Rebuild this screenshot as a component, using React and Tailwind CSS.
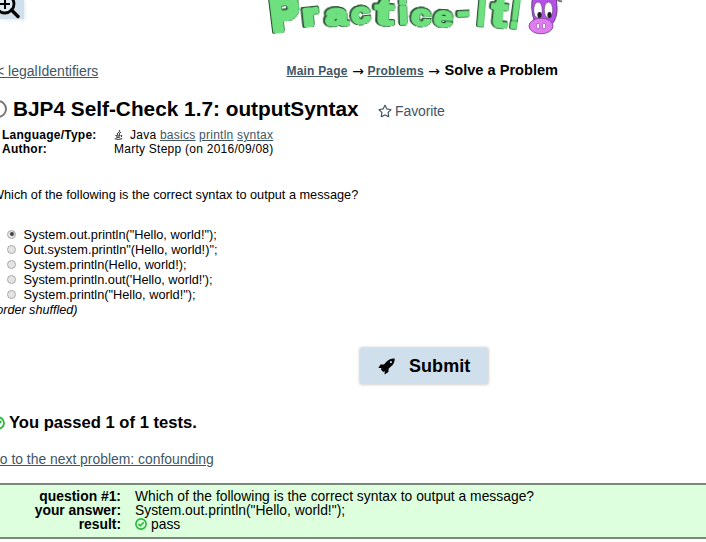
import React from "react";
import { FaRegStar } from "react-icons/fa";

const letters = [
  { c: "P", x: 273, y: 31, s: 46, sx: 0.9, r: -7, w: 6 },
  { c: "r", x: 304, y: 26, s: 30, sx: 1.25, r: -6, w: 4 },
  { c: "a", x: 326, y: 25.5, s: 30, sx: 1.3, r: -2, w: 3.2 },
  { c: "c", x: 352, y: 24.5, s: 30, sx: 1.15, r: -6, w: 2.8 },
  { c: "t", x: 375, y: 24.5, s: 36, sx: 1.5, r: 2, w: 2.8 },
  { c: "i", x: 399, y: 24, s: 31, sx: 1.05, r: -2, w: 2.6 },
  { c: "c", x: 411, y: 25, s: 29, sx: 1.2, r: 3, w: 2.8 },
  { c: "e", x: 433, y: 26.5, s: 30, sx: 1.2, r: 3, w: 2 },
  { c: "-", x: 458, y: 22, s: 28, sx: 1.25, r: -3, w: 2.6 },
  { c: "I", x: 476, y: 25, s: 50, sx: 0.65, r: 5, w: 3 },
  { c: "t", x: 490, y: 26, s: 40, sx: 1.2, r: 6, w: 2.8 },
  { c: "!", x: 508, y: 27, s: 42, sx: 0.8, r: 8, w: 2.4 },
];

function Logo() {
  const place = (l) => `translate(${l.x} ${l.y}) rotate(${l.r}) scale(${l.sx} 1)`;
  return (
    <svg className="block h-[50px] w-[706px]" viewBox="0 0 706 50">
      <g fontFamily="Liberation Sans, sans-serif" fontWeight="700" strokeLinejoin="round" fill="#6fe080" stroke="#6fe080">
        {letters.map((l, i) => (
          <text key={i} className="[filter:drop-shadow(0.7px_0_0_#26502f)_drop-shadow(-0.7px_0_0_#26502f)_drop-shadow(0_0.7px_0_#26502f)_drop-shadow(0_-0.7px_0_#26502f)]" transform={place(l)} fontSize={l.s} strokeWidth={l.w}>{l.c}</text>
        ))}
      </g>
      <path d="M556-2q3 4 6 3" stroke="#777" strokeWidth="2" fill="none" />
      <path d="M533-4Q530 8 534 20L550 27Q558 18 557 7L556-4Z" fill="#b64fe8" stroke="#68408a" strokeWidth="1" />
      <ellipse cx="538" cy="10" rx="4.3" ry="8" fill="#fff" stroke="#68408a" strokeWidth=".7" />
      <ellipse cx="548.5" cy="10" rx="4.3" ry="8" fill="#fff" stroke="#68408a" strokeWidth=".7" />
      <ellipse cx="539.5" cy="15" rx="2.1" ry="3" fill="#222" />
      <ellipse cx="549.5" cy="15" rx="2.1" ry="3" fill="#222" />
      <ellipse cx="541" cy="26" rx="12" ry="7.8" fill="#de7cf0" stroke="#88519c" strokeWidth="1" />
      <ellipse cx="538" cy="26" rx="1.5" ry="2.8" fill="#fff" stroke="#88519c" strokeWidth=".6" />
      <ellipse cx="544" cy="26" rx="1.5" ry="2.8" fill="#fff" stroke="#88519c" strokeWidth=".6" />
    </svg>
  );
}

function Check({ className }) {
  return (
    <svg className={className} viewBox="0 0 12 12" fill="none" stroke="#28b83b" strokeWidth="1.6">
      <circle cx="6" cy="6" r="5.1" />
      <path d="M3.4 6l1.9 1.9 3.5-3.6" />
    </svg>
  );
}

function Rocket({ className }) {
  return (
    <svg className={className} viewBox="0 0 17 17" fill="#000">
      <path fillRule="evenodd" d="M16.7.4Q11.2.1 8 4.2L6 6.4H2.5L.4 10.1l3.2-.1-.7 1.5 2.4 2.4 1.4-.8-.1 3.3 3.8-2.3.2-3.4 2-2Q16.8 5.8 16.7.4ZM12.9 3a1.1 1.1 0 1 1 0 2.2 1.1 1.1 0 0 1 0-2.2Z" />
    </svg>
  );
}

function Java({ className }) {
  return (
    <svg className={className} viewBox="0 0 9 10" fill="none" stroke="#222" strokeWidth="1">
      <path d="M5.5.2q.5 1.4-1.3 2.5t-.3 2.3M7 2q-2.5 1-1.5 2.8M1.5 5.5q2.5 1 5 0M2 7q2 .8 4 0M.7 8.7q3.500 1.4 7.500 0M7 5.400q1.800 0 0 1.700" />
    </svg>
  );
}

const link = "text-[#405666] underline";
const arrow = "flex h-4 w-[19px] items-center justify-center font-['DejaVu_Sans',sans-serif] text-[14px] leading-4 font-normal";
const answers = [
  'System.out.println("Hello, world!");',
  'Out.system.println"(Hello, world!)";',
  "System.println(Hello, world!);",
  "System.println.out('Hello, world!');",
  'System.println("Hello, world!");',
];

export default function App() {
  return (
    <div className="h-[542px] w-[706px] overflow-hidden bg-white font-['Liberation_Sans',Arial,sans-serif] text-xs text-black">
      <header className="relative h-[61px]">
        <Logo />
        <div className="absolute left-0 top-0 h-[19px] w-6 bg-[#cfdfec] shadow-[0_0_4px_#cfdfec]">
          <svg className="h-[19px] w-6" viewBox="0 0 24 19" fill="none" stroke="#000">
            <circle cx="5" cy="4" r="9" fill="#dce9f3" strokeWidth="2.8" />
            <path d="M0 4h10M5-1v10" strokeWidth="2" />
            <path d="M11.5 10l6.5 6.5" strokeWidth="3.4" strokeLinecap="round" />
          </svg>
        </div>
      </header>

      <nav className="flex h-5 items-center whitespace-nowrap">
        <a className={`${link} ml-[-4px] w-[290px] text-sm`}>&lt; legalIdentifiers</a>
        <div className="ml-[0.5px] flex items-center font-bold">
          <a className={`${link} w-[62px] tracking-[0.2px]`}>Main Page</a>
          <span className={arrow}>→</span>
          <a className={`${link} w-[57px] tracking-[0.2px]`}>Problems</a>
          <span className={arrow}>→</span>
          <span className="ml-[1px] text-[14.6px]">Solve a Problem</span>
        </div>
      </nav>

      <div className="mt-[15px] flex h-[26px] items-center whitespace-nowrap">
        <span className="ml-[-11px] mr-[6px] size-[18px] rounded-full border-2 border-[#777]" />
        <h1 className="w-[365px] text-[20.8px] font-bold">BJP4 Self-Check 1.7: outputSyntax</h1>
        <a className="mt-[3px] flex items-center gap-[3px] text-sm text-[#405666]"><FaRegStar className="size-[14px]" /><span className="tracking-[-0.1px]">Favorite</span></a>
      </div>

      <dl className="mt-[6px] grid grid-cols-[112px_1fr] pl-[2px] leading-[14px] tracking-[0.25px]">
        <dt className="font-bold">Language/Type:</dt>
        <dd className="flex items-center"><Java className="mr-[7px] h-[10px] w-[9px]" />Java&nbsp;<a className={link}>basics</a>&nbsp;<a className={link}>println</a>&nbsp;<a className={link}>syntax</a></dd>
        <dt className="font-bold">Author:</dt>
        <dd>Marty Stepp (on 2016/09/08)</dd>
      </dl>

      <p className="ml-[-8px] mt-[31px] h-4 text-[12.72px] leading-4">Which of the following is the correct syntax to output a message?</p>

      <ul className="mt-[25px] pl-[7px] text-[12.75px]">
        {answers.map((a, i) => (
          <li key={a} className="flex h-[15px] items-center">
            <span className="mb-[3px] mr-[7.5px] flex size-[9px] items-center justify-center rounded-full border border-[#aaa] bg-[#e4e4e4]">
              {i === 0 && <span className="size-[4px] rounded-full bg-[#444]" />}
            </span>
            {a}
          </li>
        ))}
      </ul>
      <p className="ml-[-8px] h-[15px] text-[12.6px] italic leading-[14px]">(order shuffled)</p>

      <button className="ml-[360px] mt-[30px] flex h-9 w-32 items-center bg-[#cfdfec] pl-[18px] text-lg font-bold shadow-[0_0_3px_#aaa]">
        <Rocket className="mr-[14px] size-[17px]" /><span className="tracking-[0.05px]">Submit</span>
      </button>

      <div className="mt-[27px] flex h-6 items-center text-[16.6px] font-bold">
        <Check className="ml-[-9px] mr-[4px] size-[14px]" />You passed 1 of 1 tests.
      </div>
      <a className={`${link} ml-[-11px] mt-[14px] block h-5 whitespace-nowrap text-[13.9px] leading-5`}>Go to the next problem: confounding</a>

      <section className="mt-[14px] grid h-[56px] grid-cols-[121px_1fr] content-start gap-x-[14px] border-y-2 border-[#7b897b] bg-[#dfd] pt-[4px] text-[13.86px] leading-[14px]">
        <b className="text-right">question #1:</b><span>Which of the following is the correct syntax to output a message?</span>
        <b className="text-right">your answer:</b><span>System.out.println("Hello, world!");</span>
        <b className="text-right">result:</b><span className="flex items-center gap-1"><Check className="size-3" />pass</span>
      </section>
    </div>
  );
}
